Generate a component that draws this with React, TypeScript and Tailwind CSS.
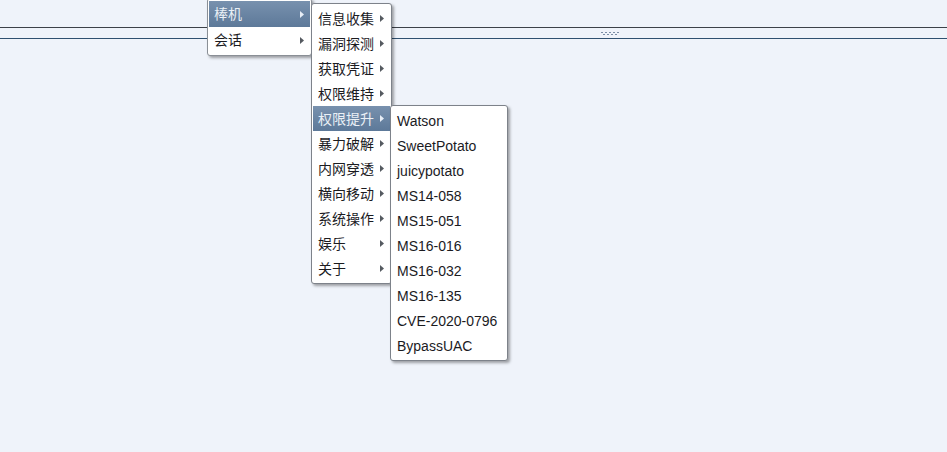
import React from 'react';

const font = { fontFamily: '"Liberation Sans", "Noto Sans CJK SC", Arial, sans-serif' };

function Arrow({ light }: { light?: boolean }) {
    return (
        <svg width="4" height="7" viewBox="0 0 4 7" className="shrink-0">
            <path d="M0 0 L4 3.5 L0 7 Z" fill={light ? '#e8eef6' : '#555a60'} />
        </svg>
    );
}

function Item({ label, active, sub, h = 'h-[25px]', pl = 'pl-[5px]', pr = 'pr-[7px]' }: { label: string; active?: boolean; sub?: boolean; h?: string; pl?: string; pr?: string }) {
    return (
        <div
            className={`${h} ${pl} ${pr} flex items-center justify-between text-[14px] leading-none whitespace-nowrap ${
                active ? 'bg-gradient-to-b from-[#7891ae] to-[#5d7999] text-[#eaf0f6]' : 'text-[#1b1b1f]'
            }`}
        >
            <span>{label}</span>
            {sub && <Arrow light={active} />}
        </div>
    );
}

const second = ['信息收集', '漏洞探测', '获取凭证', '权限维持', '权限提升', '暴力破解', '内网穿透', '横向移动', '系统操作', '娱乐', '关于'];
const third = ['Watson', 'SweetPotato', 'juicypotato', 'MS14-058', 'MS15-051', 'MS16-016', 'MS16-032', 'MS16-135', 'CVE-2020-0796', 'BypassUAC'];

export default function App() {
    return (
        <div className="relative h-[452px] w-full overflow-hidden bg-[#eff3fa]" style={font}>
            {/* splitter */}
            <div className="mt-[27px] h-[12px] border-t border-b border-t-[#3c4148] border-b-[#2f5070] flex flex-col justify-center pl-[601px] gap-[1px]">
                <div className="flex gap-[2px]">
                    {[0, 1, 2, 3, 4].map((i) => (
                        <span key={i} className="w-[2px] h-[1px] bg-[#7b8da6]" />
                    ))}
                </div>
                <div className="flex gap-[2px] pl-[2px]">
                    {[0, 1, 2, 3].map((i) => (
                        <span key={i} className="w-[2px] h-[1px] bg-[#7b8da6]" />
                    ))}
                </div>
            </div>

            {/* context menu level 1 */}
            <div className="absolute left-[207px] top-[-2px] w-[105px] bg-white border border-[#8a8f96] rounded-[3px] p-[1px] py-[2px] shadow-[2px_2px_3px_rgba(0,0,0,0.35)]">
                <Item label="棒机" active sub h="h-[26px]" pl="pl-[5px]" pr="pr-[6px]" />
                <Item label="会话" sub h="h-[26px]" pl="pl-[5px]" pr="pr-[6px]" />
            </div>

            {/* level 2 */}
            <div className="absolute left-[311px] top-[3px] w-[81px] bg-white border border-[#7d828a] rounded-[3px] px-[1px] py-[2px] shadow-[2px_2px_3px_rgba(0,0,0,0.35)]">
                {second.map((s) => (
                    <Item key={s} label={s} sub active={s === '权限提升'} pl="pl-[5px]" pr="pr-[6px]" />
                ))}
            </div>

            {/* level 3 */}
            <div className="absolute left-[390px] top-[105px] w-[118px] bg-white border border-[#7d828a] rounded-[3px] px-[1px] py-[2px] shadow-[2px_2px_3px_rgba(0,0,0,0.35)]">
                {third.map((s) => (
                    <Item key={s} label={s} pl="pl-[5px]" />
                ))}
            </div>
        </div>
    );
}
